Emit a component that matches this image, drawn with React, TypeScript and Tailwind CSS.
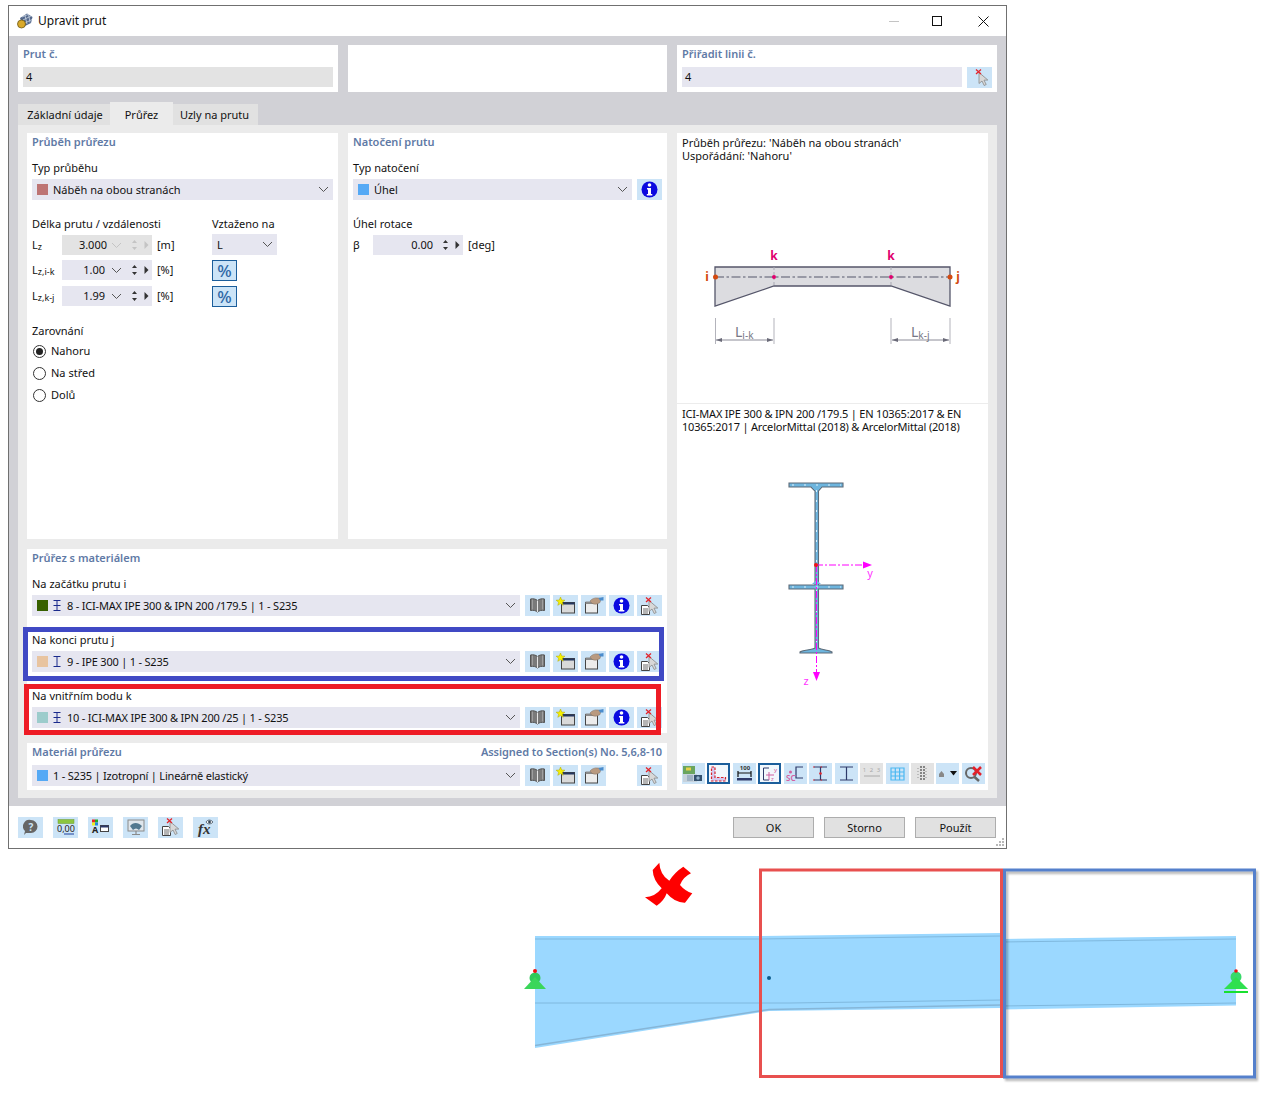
import React from 'react';

const swatch = 'w-[11px] h-[11px] shrink-0';
const heading = 'text-[11px] leading-[14px] font-semibold text-[#5f7aa6]';
const label = 'text-[11px] leading-[14px] text-[#111]';
const note = 'text-[11px] leading-[13px] text-[#111]';

const Chevron = ({ color = '#555' }: { color?: string }) => (
  <svg width="11" height="7" viewBox="0 0 11 7" className="shrink-0">
    <path d="M1 1l4.5 4.5L10 1" fill="none" stroke={color} strokeWidth="1" />
  </svg>
);

const IBeam = ({ tapered }: { tapered?: boolean }) => (
  <svg width="10" height="11" viewBox="0 0 10 11" className="shrink-0">
    <path d="M1.500 0.500h7M5 0.500v10M1.500 10.500h7" stroke="#1a2a8c" strokeWidth="1" fill="none" />
    {tapered && <path d="M1.500 5.500h7" stroke="#1a2a8c" strokeWidth="1" />}
  </svg>
);

const Select = ({
  color,
  text,
  beam,
  tapered,
  tight,
  className,
}: {
  color?: string;
  text: string;
  beam?: boolean;
  tapered?: boolean;
  tight?: boolean;
  className?: string;
}) => (
  <div className={`flex items-center h-[21px] bg-[#e6e6f0] pl-[5px] pr-[4px] ${className ?? ''}`}>
    {color && <span className={swatch} style={{ background: color }} />}
    {beam && <span className="ml-[4px] flex"><IBeam tapered={tapered} /></span>}
    <span className={`${label} ${beam ? 'ml-[5px]' : color ? 'ml-[5px]' : ''} ${tight ? 'tracking-[-0.2px]' : ''} flex-1 truncate`}>{text}</span>
    <Chevron />
  </div>
);

const IconBtn = ({ children, gray, active }: { children?: React.ReactNode; gray?: boolean; active?: boolean }) => (
  <div
    className={`w-[25px] h-[21px] shrink-0 flex items-center justify-center ${gray ? 'bg-[#e3e3e3]' : 'bg-[#cce4f7]'} ${active ? 'border-2 border-[#1b5e9b]' : ''}`}
  >
    {children}
  </div>
);

const BookIcon = () => (
  <svg width="17" height="15" viewBox="0 0 17 15">
    <path d="M8.500 2.500C7 1 4 .5 1.500 1v11.500c2.500-.5 5.500 0 7 1.500 1.500-1.500 4.500-2 7-1.500V1C13 .5 10 1 8.500 2.500z" fill="#7a7a7a" stroke="#555" strokeWidth="1" />
    <path d="M8.500 2.500v11.500" stroke="#e6e6e6" strokeWidth="1" />
    <path d="M3.500 1.500v10M13.500 1.500v10" stroke="#a8a8a8" strokeWidth=".8" />
  </svg>
);

const NewIcon = () => (
  <svg width="20" height="17" viewBox="0 0 20 17">
    <rect x="5.500" y="5.500" width="13" height="10.500" fill="#d9d9d9" stroke="#444" />
    <rect x="5.500" y="5.500" width="13" height="2" fill="#24365f" />
    <path d="M4.500 0l1.200 3 3.200.200-2.500 2 .8 3.100-2.700-1.700-2.700 1.700.8-3.100-2.500-2L3.300 3z" fill="#f6f000" stroke="#b3a800" strokeWidth=".5" />
  </svg>
);

const EditIcon = () => (
  <svg width="20" height="17" viewBox="0 0 20 17">
    <rect x="1.500" y="5.500" width="12" height="10.500" fill="#ececec" stroke="#444" />
    <rect x="1.500" y="4.500" width="12" height="2.500" fill="#8a8a8a" />
    <path d="M6 4c2-2.500 5-3.500 8-3l3 .5-1 4-3 1.500c-2.500.5-5.500 0-7-3z" fill="#b99a80" stroke="#7d6a5c" strokeWidth=".5" />
    <path d="M14.500 1l5-1v3.500l-3.500 0z" fill="#4b8ccc" />
  </svg>
);

const InfoIcon = () => (
  <svg width="17" height="17" viewBox="0 0 17 17">
    <circle cx="8.500" cy="8.500" r="8" fill="#0a0ae0" />
    <circle cx="8.500" cy="4" r="1.800" fill="#fff" />
    <path d="M6 7h4v6h1.300v1.500H5.800V13H7V8.500H6z" fill="#fff" />
  </svg>
);

const PickIcon = ({ doc = true }: { doc?: boolean }) => (
  <svg width="20" height="18" viewBox="0 0 20 18">
    {doc && (
      <g>
        <path d="M1.500 8.500h6l2 2v7h-8z" fill="#fff" stroke="#444" />
        <path d="M3 12h5M3 14h5M3 16h5" stroke="#444" strokeWidth=".8" />
      </g>
    )}
    <path d="M9 3.500v11l3-2.500 2.200 4.500 2-1-2.200-4.300 3.800-.2z" fill="#d8d8d8" stroke="#888" strokeWidth=".8" />
    <path d="M6 0.500l5 4.500M11 0.500L6 5" stroke="#e3242b" strokeWidth="1.300" />
  </svg>
);

const RowIcons = ({ info = true }: { info?: boolean }) => (
  <div className="flex gap-[3px] ml-[5px]">
    <IconBtn><BookIcon /></IconBtn>
    <IconBtn><NewIcon /></IconBtn>
    <IconBtn><EditIcon /></IconBtn>
    {info ? <IconBtn><InfoIcon /></IconBtn> : <div className="w-[25px] h-[21px]" />}
    <IconBtn><PickIcon /></IconBtn>
  </div>
);

const Spinner = ({ value, disabled, plain }: { value: string; disabled?: boolean; plain?: boolean }) => {
  const c = disabled ? '#c4c4c4' : '#333';
  return (
    <div className={`w-[90px] h-[20px] flex items-center shrink-0 ${disabled ? 'bg-[#e3e3e3]' : 'bg-[#e6e6f0]'}`}>
      {plain ? (
        <span className="w-[60px] text-right text-[11px] leading-[14px] text-[#111]">{value}</span>
      ) : (
        <>
          <span className={`w-[45px] text-right text-[11px] leading-[14px] text-[#111] ${disabled ? '' : 'pr-[2px]'}`}>{value}</span>
          <span className="ml-[4px] flex"><Chevron color={disabled ? '#c4c4c4' : '#555'} /></span>
        </>
      )}
      <svg width="7" height="12" viewBox="0 0 7 12" className="ml-[9px]">
        <path d="M3.500 1L6 4H1zM3.500 11L1 8h5z" fill={c} />
      </svg>
      <svg width="5" height="8" viewBox="0 0 5 8" className="ml-[6px]">
        <path d="M0.500 0L4.500 4 .5 8z" fill={c} />
      </svg>
    </div>
  );
};

const Lz = ({ sub }: { sub: string }) => (
  <span className="w-[30px] h-[20px] flex items-center text-[11px] leading-[14px] text-[#111]">
    L<span className="text-[9px] relative top-[2px]">{sub}</span>
  </span>
);

const Percent = () => (
  <div className="w-[25px] h-[21px] border border-[#1b5e9b] bg-[#cce4f7] flex items-center justify-center text-[17px] leading-none font-medium text-[#2f68a6]">
    %
  </div>
);

const Radio = ({ text, checked }: { text: string; checked?: boolean }) => (
  <div className="flex items-center h-[22px] pl-[1px]">
    <span className="w-[13px] h-[13px] rounded-full border border-[#333] flex items-center justify-center bg-white">
      {checked && <span className="w-[7px] h-[7px] rounded-full bg-[#222]" />}
    </span>
    <span className={`${label} ml-[5px]`}>{text}</span>
  </div>
);

const SectionRow = ({
  title,
  color,
  text,
  tapered,
}: {
  title: string;
  color: string;
  text: string;
  tapered?: boolean;
}) => (
  <div className="h-[56px] pt-[12px]">
    <div className={label}>{title}</div>
    <div className="flex mt-[4px]">
      <Select color={color} text={text} beam tapered={tapered} tight className="flex-1 min-w-0" />
      <RowIcons />
    </div>
  </div>
);

const TaperDrawing = () => (
  <svg width="311" height="130" viewBox="677 230 311 130" className="block">
    <path d="M715 267H950V306L891 286H774L715 306Z" fill="#dcdce0" stroke="#55566a" strokeWidth="1.300" />
    <path d="M715 277H950" stroke="#55566a" strokeWidth="1.200" strokeDasharray="9 2.500 2.500 2.500" />
    <path d="M774 267V286M891 267V286" stroke="#a9a9b3" strokeWidth="1" strokeDasharray="3 2" />
    <circle cx="715.500" cy="277" r="2.500" fill="#d34a10" />
    <circle cx="950" cy="277" r="2.500" fill="#d34a10" />
    <circle cx="774" cy="277" r="2" fill="#e0006e" />
    <circle cx="891" cy="277" r="2" fill="#e0006e" />
    <text x="707" y="281" textAnchor="middle" fontSize="12" fontWeight="700" fill="#d34a10">i</text>
    <text x="958" y="281" textAnchor="middle" fontSize="12" fontWeight="700" fill="#d34a10">j</text>
    <text x="774" y="260" textAnchor="middle" fontSize="12" fontWeight="700" fill="#e0006e">k</text>
    <text x="891" y="260" textAnchor="middle" fontSize="12" fontWeight="700" fill="#e0006e">k</text>
    <path d="M715.500 318V344M774 318V344M891 318V344M950 318V344" stroke="#b3b3bb" strokeWidth="1" />
    <path d="M716 340H773M892 340H949" stroke="#8c8c98" strokeWidth="1" />
    <path d="M716 340l6-2v4zM773 340l-6-2v4zM892 340l6-2v4zM949 340l-6-2v4z" fill="#6a6a78" />
    <text x="735" y="337" fontSize="14" fill="#777785">L<tspan fontSize="10" dy="2">i-k</tspan></text>
    <text x="911" y="337" fontSize="14" fill="#777785">L<tspan fontSize="10" dy="2">k-j</tspan></text>
  </svg>
);

const SectionDrawing = () => (
  <svg width="311" height="220" viewBox="677 470 311 220" className="block">
    <path d="M789 483H843V487H822L818.500 491V585H843V589H818.500V648C822 650 830 650 832 652V653H800V652C802 650 812 650 815 648V589H789V585H815V491L811 487H789Z" fill="#6db5de" stroke="#5d6b78" strokeWidth="1.100" />
    <path d="M812 584L816.500 580 821 584zM812 487h9l-4.500 5z" fill="#6db5de" />
    <path d="M792 485H841M792 587H841" stroke="#dff1fb" strokeWidth="1" strokeDasharray="2 10" />
    <path d="M816.500 490V585M816.500 590V648" stroke="#dff1fb" strokeWidth="1" strokeDasharray="2 8" />
    <path d="M816 565H864" stroke="#ff00ff" strokeWidth="1" strokeDasharray="7 2 2 2" />
    <path d="M816.500 565V673" stroke="#ff00ff" strokeWidth="1" strokeDasharray="7 2 2 2" />
    <path d="M863 561.500L872 565 863 568.500z" fill="#ff00ff" />
    <path d="M813 672L816.500 681 820 672z" fill="#ff00ff" />
    <circle cx="816" cy="565" r="2" fill="#f01414" />
    <text x="870" y="577" textAnchor="middle" fontSize="11" fill="#ff33ff">y</text>
    <text x="806" y="685" textAnchor="middle" fontSize="11" fill="#ff33ff">z</text>
  </svg>
);

const ToolBtn = ({ children, gray, active }: { children?: React.ReactNode; gray?: boolean; active?: boolean }) => (
  <div
    className={`w-[23px] h-[21px] shrink-0 flex items-center justify-center ${gray ? 'bg-[#e3e3e3]' : active ? 'bg-[#f2f8fd]' : 'bg-[#cce4f7]'} ${active ? 'border-2 border-[#1b5e9b]' : ''}`}
  >
    {children}
  </div>
);

const Toolbar = () => (
  <div className="flex h-[21px] pl-[5px] gap-[2.45px]">
    <ToolBtn>
      <svg width="21" height="18" viewBox="0 0 21 18">
        <rect x="0" y="1" width="12" height="8" fill="#6aa55f" />
        <rect x="3" y="2.500" width="5" height="3" fill="#e6d24a" />
        <rect x="0" y="9" width="14" height="8" fill="#c6d2dc" />
        <rect x="4" y="10" width="6" height="6" fill="#9fb2c4" />
        <path d="M11 10h8v6h-8z" fill="#33506e" />
        <circle cx="15" cy="13" r="1.700" fill="#8fb0cc" />
      </svg>
    </ToolBtn>
    <ToolBtn active>
      <svg width="17" height="16" viewBox="0 0 17 16">
        <path d="M1.500 1H5V11.500H15.500V15H1.500Z" fill="#d4c8ee" stroke="#d8232a" strokeWidth="1.200" strokeDasharray="2.500 1.500" />
      </svg>
    </ToolBtn>
    <ToolBtn>
      <svg width="19" height="17" viewBox="0 0 19 17">
        <text x="10" y="5" textAnchor="middle" fontSize="6" fontWeight="700" fill="#333">100</text>
        <path d="M3 6V12M16 6V12M3 8H16" stroke="#111" strokeWidth="1.200" fill="none" />
        <rect x="2" y="13" width="15" height="2.500" fill="#2e3a6a" />
      </svg>
    </ToolBtn>
    <ToolBtn active>
      <svg width="17" height="16" viewBox="0 0 17 16">
        <path d="M8 2H2.500V14H8" fill="none" stroke="#2e3a6a" strokeWidth="1" />
        <path d="M5 9H13M8 6V14" stroke="#cf5ea0" strokeWidth="1" />
        <text x="13" y="6" fontSize="6" fill="#cf5ea0">y</text>
        <text x="10" y="15" fontSize="6" fill="#cf5ea0">z</text>
      </svg>
    </ToolBtn>
    <ToolBtn>
      <svg width="20" height="17" viewBox="0 0 20 17">
        <path d="M18 2H11V13H18" fill="none" stroke="#2e3a6a" strokeWidth="1.200" />
        <circle cx="5.500" cy="7" r="1.500" fill="#d45fa0" />
        <text x="1" y="16" fontSize="8" fontWeight="600" fill="#d45fa0">SC</text>
      </svg>
    </ToolBtn>
    <ToolBtn>
      <svg width="19" height="17" viewBox="0 0 19 17">
        <path d="M3 2H16M3 15H16M9.500 2V15" stroke="#2e3a6a" strokeWidth="1.200" />
        <path d="M2 2H17M2 15H17" stroke="#e0242c" strokeWidth="1" strokeDasharray="1.500 6" />
        <circle cx="9.500" cy="8.500" r="1.300" fill="#e0242c" />
      </svg>
    </ToolBtn>
    <ToolBtn>
      <svg width="19" height="17" viewBox="0 0 19 17">
        <path d="M3 2H16M3 15H16M9.500 2V15" stroke="#2e3a6a" strokeWidth="1.200" />
      </svg>
    </ToolBtn>
    <ToolBtn gray>
      <svg width="20" height="17" viewBox="0 0 20 17">
        <text x="10" y="7" textAnchor="middle" fontSize="6" fill="#aaa" letterSpacing="1">1 2 3</text>
        <path d="M2 11H18" stroke="#aaa" strokeWidth="1" />
      </svg>
    </ToolBtn>
    <ToolBtn>
      <svg width="17" height="16" viewBox="0 0 17 16">
        <path d="M2 2H15V14H2ZM2 6H15M2 10H15M6.300 2V14M10.600 2V14" fill="none" stroke="#4cb8f2" strokeWidth="1.200" />
      </svg>
    </ToolBtn>
    <ToolBtn gray>
      <svg width="13" height="17" viewBox="0 0 13 17">
        <path d="M4 2H9M4 5H9M4 8H9M4 11H9M4 14H9" stroke="#666" strokeWidth="1.500" strokeDasharray="2 1" />
        <path d="M1 3.500H12M1 6.500H12M1 9.500H12M1 12.500H12" stroke="#bbb" strokeWidth="1" strokeDasharray="2 6" />
      </svg>
    </ToolBtn>
    <ToolBtn>
      <svg width="19" height="9" viewBox="0 0 19 9">
        <path d="M1 8V5L3.500 2 6 5V8z" fill="#888" />
        <path d="M12 2H19L15.500 6.500z" fill="#111" />
      </svg>
    </ToolBtn>
    <ToolBtn>
      <svg width="19" height="17" viewBox="0 0 19 17">
        <circle cx="7" cy="8" r="5" fill="none" stroke="#666" strokeWidth="2" />
        <path d="M10.500 12L15 16" stroke="#666" strokeWidth="2.500" />
        <path d="M9 2L17 10M17 2L9 10" stroke="#e3202a" strokeWidth="2.500" />
      </svg>
    </ToolBtn>
  </div>
);

const FootBtn = ({ children }: { children: React.ReactNode }) => (
  <div className="w-[25px] h-[21px] bg-[#cce4f7] flex items-center justify-center shrink-0">{children}</div>
);

const DialogButton = ({ text }: { text: string }) => (
  <div className="w-[81px] h-[21px] border border-[#adadad] bg-[#e1e1e1] flex items-center justify-center text-[11px] leading-none text-[#111]">
    {text}
  </div>
);

const BottomDrawing = () => (
  <svg width="1277" height="250" viewBox="0 849 1277 250" className="block">
    <defs>
      <filter id="frameShadow" x="-5%" y="-5%" width="110%" height="110%">
        <feGaussianBlur stdDeviation="1.200" />
      </filter>
    </defs>
    <path
      d="M659.300 862.700Q660 875 669.300 880.700Q675 872 683.300 866.700L691 873.300Q683 877 680 885Q685 891 692.300 893.300L685 902.700Q675 903 666.700 893.300Q664 901 656.700 905.700L645 897.300Q655 897 661.700 888.300Q653 880 652.700 870Z"
      fill="#fe0000"
    />
    <path d="M535 936H760L1001 933V1008L769 1011L535 1048Z" fill="#9bd8ff" />
    <path d="M1001 939L1236 936V1005.500L1001 1009.500Z" fill="#9bd8ff" />
    <path d="M535 939H760L1001 936M535 1003H790L1001 1000M1001 942L1236 939M1001 1006L1236 1003" fill="none" stroke="#7fb8de" strokeWidth="1" />
    <path d="M535 1045.500L769 1009.500 1001 1005" fill="none" stroke="#86b6d8" strokeWidth="1.500" />
    <circle cx="769" cy="978" r="2" fill="#0b5c8c" />
    <g>
      <circle cx="535" cy="978" r="5.500" fill="#2fc95a" />
      <path d="M524 989L535 977 546 989Z" fill="#3bd65a" />
      <circle cx="535" cy="971" r="2" fill="#f01010" />
    </g>
    <g>
      <circle cx="1236" cy="977" r="5.500" fill="#38d96a" />
      <path d="M1224 989L1236 977 1248 989Z" fill="#2fe04f" />
      <circle cx="1236" cy="971" r="1.800" fill="#f01010" />
      <rect x="1224" y="991" width="24" height="2" fill="#18e030" />
    </g>
    <rect x="1006.500" y="872.500" width="250" height="207" fill="none" stroke="#000" strokeOpacity=".28" strokeWidth="3" filter="url(#frameShadow)" />
    <rect x="760.500" y="870" width="241" height="206.500" fill="none" stroke="#e8504f" strokeWidth="3" />
    <rect x="1004.500" y="870" width="250" height="207" fill="none" stroke="#5580cc" strokeWidth="3" />
  </svg>
);

export default function App() {
  return (
    <div className="w-[1277px] h-[1099px] bg-white overflow-hidden font-['Noto_Sans','Open_Sans',sans-serif]">
      <div className="pt-[5px] pl-[8px] h-[849px]">
        <div className="w-[999px] h-[844px] border border-[#707070] flex flex-col bg-white">
          {/* Title bar */}
          <div className="h-[30px] flex items-center pl-[8px] shrink-0">
            <svg width="16" height="16" viewBox="0 0 16 16">
              <path d="M3 5L10 0.500 15.500 4 14 10 6 14Z" fill="#53688c" />
              <path d="M5 4L11 1.500M6 7L14 3M7 10.500L15 6.500M8 2.500L10 11M11.500 1L13 9.500" stroke="#c9d4e2" strokeWidth=".8" />
              <circle cx="4.500" cy="11" r="4" fill="#d9a92a" stroke="#6e5a17" strokeWidth=".8" />
            </svg>
            <span className="ml-[5px] text-[12px] leading-none text-[#111]">Upravit prut</span>
            <div className="ml-auto flex items-center">
              <span className="w-[10px] h-px bg-[#c4c4c4] mr-[33px]" />
              <span className="w-[10px] h-[10px] border border-[#111] mr-[36px]" />
              <svg width="11" height="11" viewBox="0 0 11 11" className="mr-[17px]">
                <path d="M0.500 0.500l10 10M10.500 0.500l-10 10" stroke="#111" strokeWidth="1" />
              </svg>
            </div>
          </div>

          {/* Body */}
          <div className="flex-1 bg-[#d1d1d6] px-[9px] pt-[9px] pb-[8px] flex flex-col min-h-0">
            <div className="flex gap-[10px] h-[47px] shrink-0">
              <div className="w-[320px] bg-white px-[5px] pt-[2px]">
                <div className={heading}>Prut č.</div>
                <div className={`mt-[6px] h-[20px] bg-[#e3e3e3] pl-[3px] flex items-center ${label}`}>4</div>
              </div>
              <div className="w-[319px] bg-white" />
              <div className="w-[320px] bg-white pl-[5px] pr-[5px] pt-[2px]">
                <div className={heading}>Přiřadit linii č.</div>
                <div className="mt-[6px] flex gap-[5px]">
                  <div className={`flex-1 h-[20px] bg-[#e6e6f0] pl-[3px] flex items-center ${label}`}>4</div>
                  <div className="w-[25px] h-[21px] bg-[#cce4f7] flex items-center justify-center">
                    <PickIcon doc={false} />
                  </div>
                </div>
              </div>
            </div>

            {/* Tabs */}
            <div className="flex items-end h-[23px] mt-[10px] shrink-0 text-[11px] leading-none text-[#111]">
              <div className="w-[92px] h-[21px] bg-[#e1e1e1] flex items-center justify-center pl-[2px]">Základní údaje</div>
              <div className="w-[63px] h-[23px] bg-[#ebebeb] flex items-center justify-center pt-[2px]">Průřez</div>
              <div className="w-[85px] h-[21px] bg-[#e1e1e1] flex items-center justify-center pr-[2px]">Uzly na prutu</div>
            </div>

            <div className="flex-1 bg-[#ebebeb] pl-[9px] pr-[9px] pt-[8px] pb-[8px] flex gap-[10px] min-h-0">
              {/* Left area */}
              <div className="w-[640px] flex flex-col relative">
                <div className="flex gap-[10px] h-[406px] shrink-0">
                  <div className="w-[311px] bg-white px-[5px] pt-[2px]">
                    <div className={heading}>Průběh průřezu</div>
                    <div className={`${label} mt-[12px]`}>Typ průběhu</div>
                    <Select color="#bd7474" text="Náběh na obou stranách" className="mt-[4px]" />
                    <div className="flex mt-[17px]">
                      <span className={`${label} w-[180px]`}>Délka prutu / vzdálenosti</span>
                      <span className={label}>Vztaženo na</span>
                    </div>
                    <div className="flex mt-[4px] h-[20px] items-start">
                      <Lz sub="z" />
                      <Spinner value="3.000" disabled />
                      <span className={`${label} ml-[5px] w-[55px] h-[20px] flex items-center`}>[m]</span>
                      <div className="w-[65px] h-[21px] -mt-px bg-[#e6e6f0] flex items-center justify-between pl-[5px] pr-[4px]">
                        <span className={label}>L</span>
                        <Chevron />
                      </div>
                    </div>
                    <div className="flex mt-[5px] h-[21px] items-start">
                      <Lz sub="z,i-k" />
                      <Spinner value="1.00" />
                      <span className={`${label} ml-[5px] w-[55px] h-[20px] flex items-center`}>[%]</span>
                      <Percent />
                    </div>
                    <div className="flex mt-[5px] h-[21px] items-start">
                      <Lz sub="z,k-j" />
                      <Spinner value="1.99" />
                      <span className={`${label} ml-[5px] w-[55px] h-[20px] flex items-center`}>[%]</span>
                      <Percent />
                    </div>
                    <div className={`${label} mt-[17px]`}>Zarovnání</div>
                    <div className="mt-[2px]">
                      <Radio text="Nahoru" checked />
                      <Radio text="Na střed" />
                      <Radio text="Dolů" />
                    </div>
                  </div>

                  <div className="w-[319px] bg-white px-[5px] pt-[2px]">
                    <div className={heading}>Natočení prutu</div>
                    <div className={`${label} mt-[12px]`}>Typ natočení</div>
                    <div className="flex mt-[4px] gap-[5px]">
                      <Select color="#55a9f5" text="Úhel" className="flex-1" />
                      <IconBtn><InfoIcon /></IconBtn>
                    </div>
                    <div className={`${label} mt-[17px]`}>Úhel rotace</div>
                    <div className="flex items-center mt-[4px] h-[20px]">
                      <span className={`${label} w-[20px]`}>β</span>
                      <Spinner value="0.00" plain />
                      <span className={`${label} ml-[5px]`}>[deg]</span>
                    </div>
                  </div>
                </div>

                <div className="mt-[10px] h-[184px] bg-white px-[5px] pt-[2px] shrink-0">
                  <div className={heading}>Průřez s materiálem</div>
                  <SectionRow title="Na začátku prutu i" color="#376000" text="8 - ICI-MAX IPE 300 & IPN 200 /179.5 | 1 - S235" tapered />
                  <SectionRow title="Na konci prutu j" color="#e8c4a0" text="9 - IPE 300 | 1 - S235" />
                  <SectionRow title="Na vnitřním bodu k" color="#9ccccc" text="10 - ICI-MAX IPE 300 & IPN 200 /25 | 1 - S235" tapered />
                </div>

                <div className="mt-[10px] flex-1 bg-white px-[5px] pt-[2px]">
                  <div className="flex justify-between">
                    <span className={heading}>Materiál průřezu</span>
                    <span className={`${heading} tracking-[-0.05px]`}>Assigned to Section(s) No. 5,6,8-10</span>
                  </div>
                  <div className="flex mt-[6px]">
                    <Select color="#55a9f5" text="1 - S235 | Izotropní | Lineárně elastický" tight className="flex-1 min-w-0" />
                    <RowIcons info={false} />
                  </div>
                </div>

                {/* Highlight frames over the section rows */}
                <div className="absolute left-[-4px] top-[494px] w-[641px] h-[54px] border-[5px] border-[#4049c4]" />
                <div className="absolute left-[-3px] top-[551px] w-[637px] h-[51px] border-[5px] border-[#ee1c25]" />
              </div>

              {/* Right preview */}
              <div className="w-[311px] bg-white flex flex-col">
                <div className="h-[271px] shrink-0 border-b border-[#ececec] overflow-hidden">
                  <div className={`${note} px-[5px] pt-[3px]`}>
                    Průběh průřezu: 'Náběh na obou stranách'
                    <br />
                    Uspořádání: 'Nahoru'
                  </div>
                  <div className="mt-[68px]"><TaperDrawing /></div>
                </div>
                <div className={`${note} px-[5px] pt-[3px] tracking-[-0.18px]`}>
                  ICI-MAX IPE 300 & IPN 200 /179.5 | EN 10365:2017 & EN 10365:2017 | ArcelorMittal (2018) & ArcelorMittal (2018)
                </div>
                <div className="mt-[37px]"><SectionDrawing /></div>
                <div className="mt-[73px]"><Toolbar /></div>
              </div>
            </div>
          </div>

          {/* Footer */}
          <div className="h-[42px] shrink-0 flex items-center pl-[9px] pr-[10px] relative">
            <div className="flex gap-[10px]">
              <FootBtn>
                <svg width="16" height="16" viewBox="0 0 16 16">
                  <path d="M8 1a6.500 6.500 0 0 1 0 13H3l-2 2 1-4A6.500 6.500 0 0 1 8 1z" fill="#666" />
                  <text x="8" y="11.500" textAnchor="middle" fontSize="10" fontWeight="700" fill="#cce4f7">?</text>
                </svg>
              </FootBtn>
              <FootBtn>
                <svg width="18" height="17" viewBox="0 0 18 17">
                  <rect x="1" y="0.500" width="16" height="4" fill="#8cc63f" stroke="#6a9a30" strokeWidth=".5" />
                  <text x="9" y="13" textAnchor="middle" fontSize="9" fill="#222">0,00</text>
                  <path d="M7 15H17" stroke="#1b3f9c" strokeWidth="1" />
                </svg>
              </FootBtn>
              <FootBtn>
                <svg width="19" height="17" viewBox="0 0 19 17">
                  <rect x="1" y="0.500" width="3" height="3" fill="#e22" />
                  <rect x="4" y="0.500" width="3" height="3" fill="#2a2" />
                  <rect x="1" y="3.500" width="3" height="3" fill="#ee2" />
                  <rect x="4" y="3.500" width="3" height="3" fill="#28d" />
                  <text x="4" y="14" textAnchor="middle" fontSize="9" fontWeight="700" fill="#222">A</text>
                  <rect x="9.500" y="6.500" width="8" height="6" fill="#fff" stroke="#444" />
                  <rect x="9.500" y="6.500" width="8" height="2" fill="#2e3a6a" />
                </svg>
              </FootBtn>
              <FootBtn>
                <svg width="20" height="17" viewBox="0 0 20 17">
                  <rect x="2" y="1" width="16" height="11" fill="#dfe6ec" stroke="#8a8a8a" />
                  <path d="M4 7c3-4 8-4 12 0l-3 4c-2-2-4-2-6 0z" fill="#52788f" />
                  <path d="M10 12v3M6 15.500h8" stroke="#8a8a8a" strokeWidth="1.200" />
                </svg>
              </FootBtn>
              <FootBtn><PickIcon /></FootBtn>
              <FootBtn>
                <svg width="20" height="19" viewBox="0 0 20 19">
                  <text x="2" y="16" fontFamily="Liberation Serif, serif" fontStyle="italic" fontWeight="700" fontSize="15" fill="#333">fx</text>
                  <path d="M10 4c1.500-2.500 5-2.500 7 0-2 2.500-5.500 2.500-7 0z" fill="#fff" stroke="#345" strokeWidth=".8" />
                  <circle cx="13.500" cy="4" r="1.400" fill="#345" />
                </svg>
              </FootBtn>
            </div>
            <div className="ml-auto flex gap-[10px]">
              <DialogButton text="OK" />
              <DialogButton text="Storno" />
              <DialogButton text="Použít" />
            </div>
            <svg width="10" height="10" viewBox="0 0 10 10" className="absolute right-[1px] bottom-[1px]">
              <path d="M7 1h2v2H7zM4 4h2v2H4zM7 4h2v2H7zM1 7h2v2H1zM4 7h2v2H4zM7 7h2v2H7z" fill="#b8b8b8" />
            </svg>
          </div>
        </div>
      </div>
      <BottomDrawing />
    </div>
  );
}
